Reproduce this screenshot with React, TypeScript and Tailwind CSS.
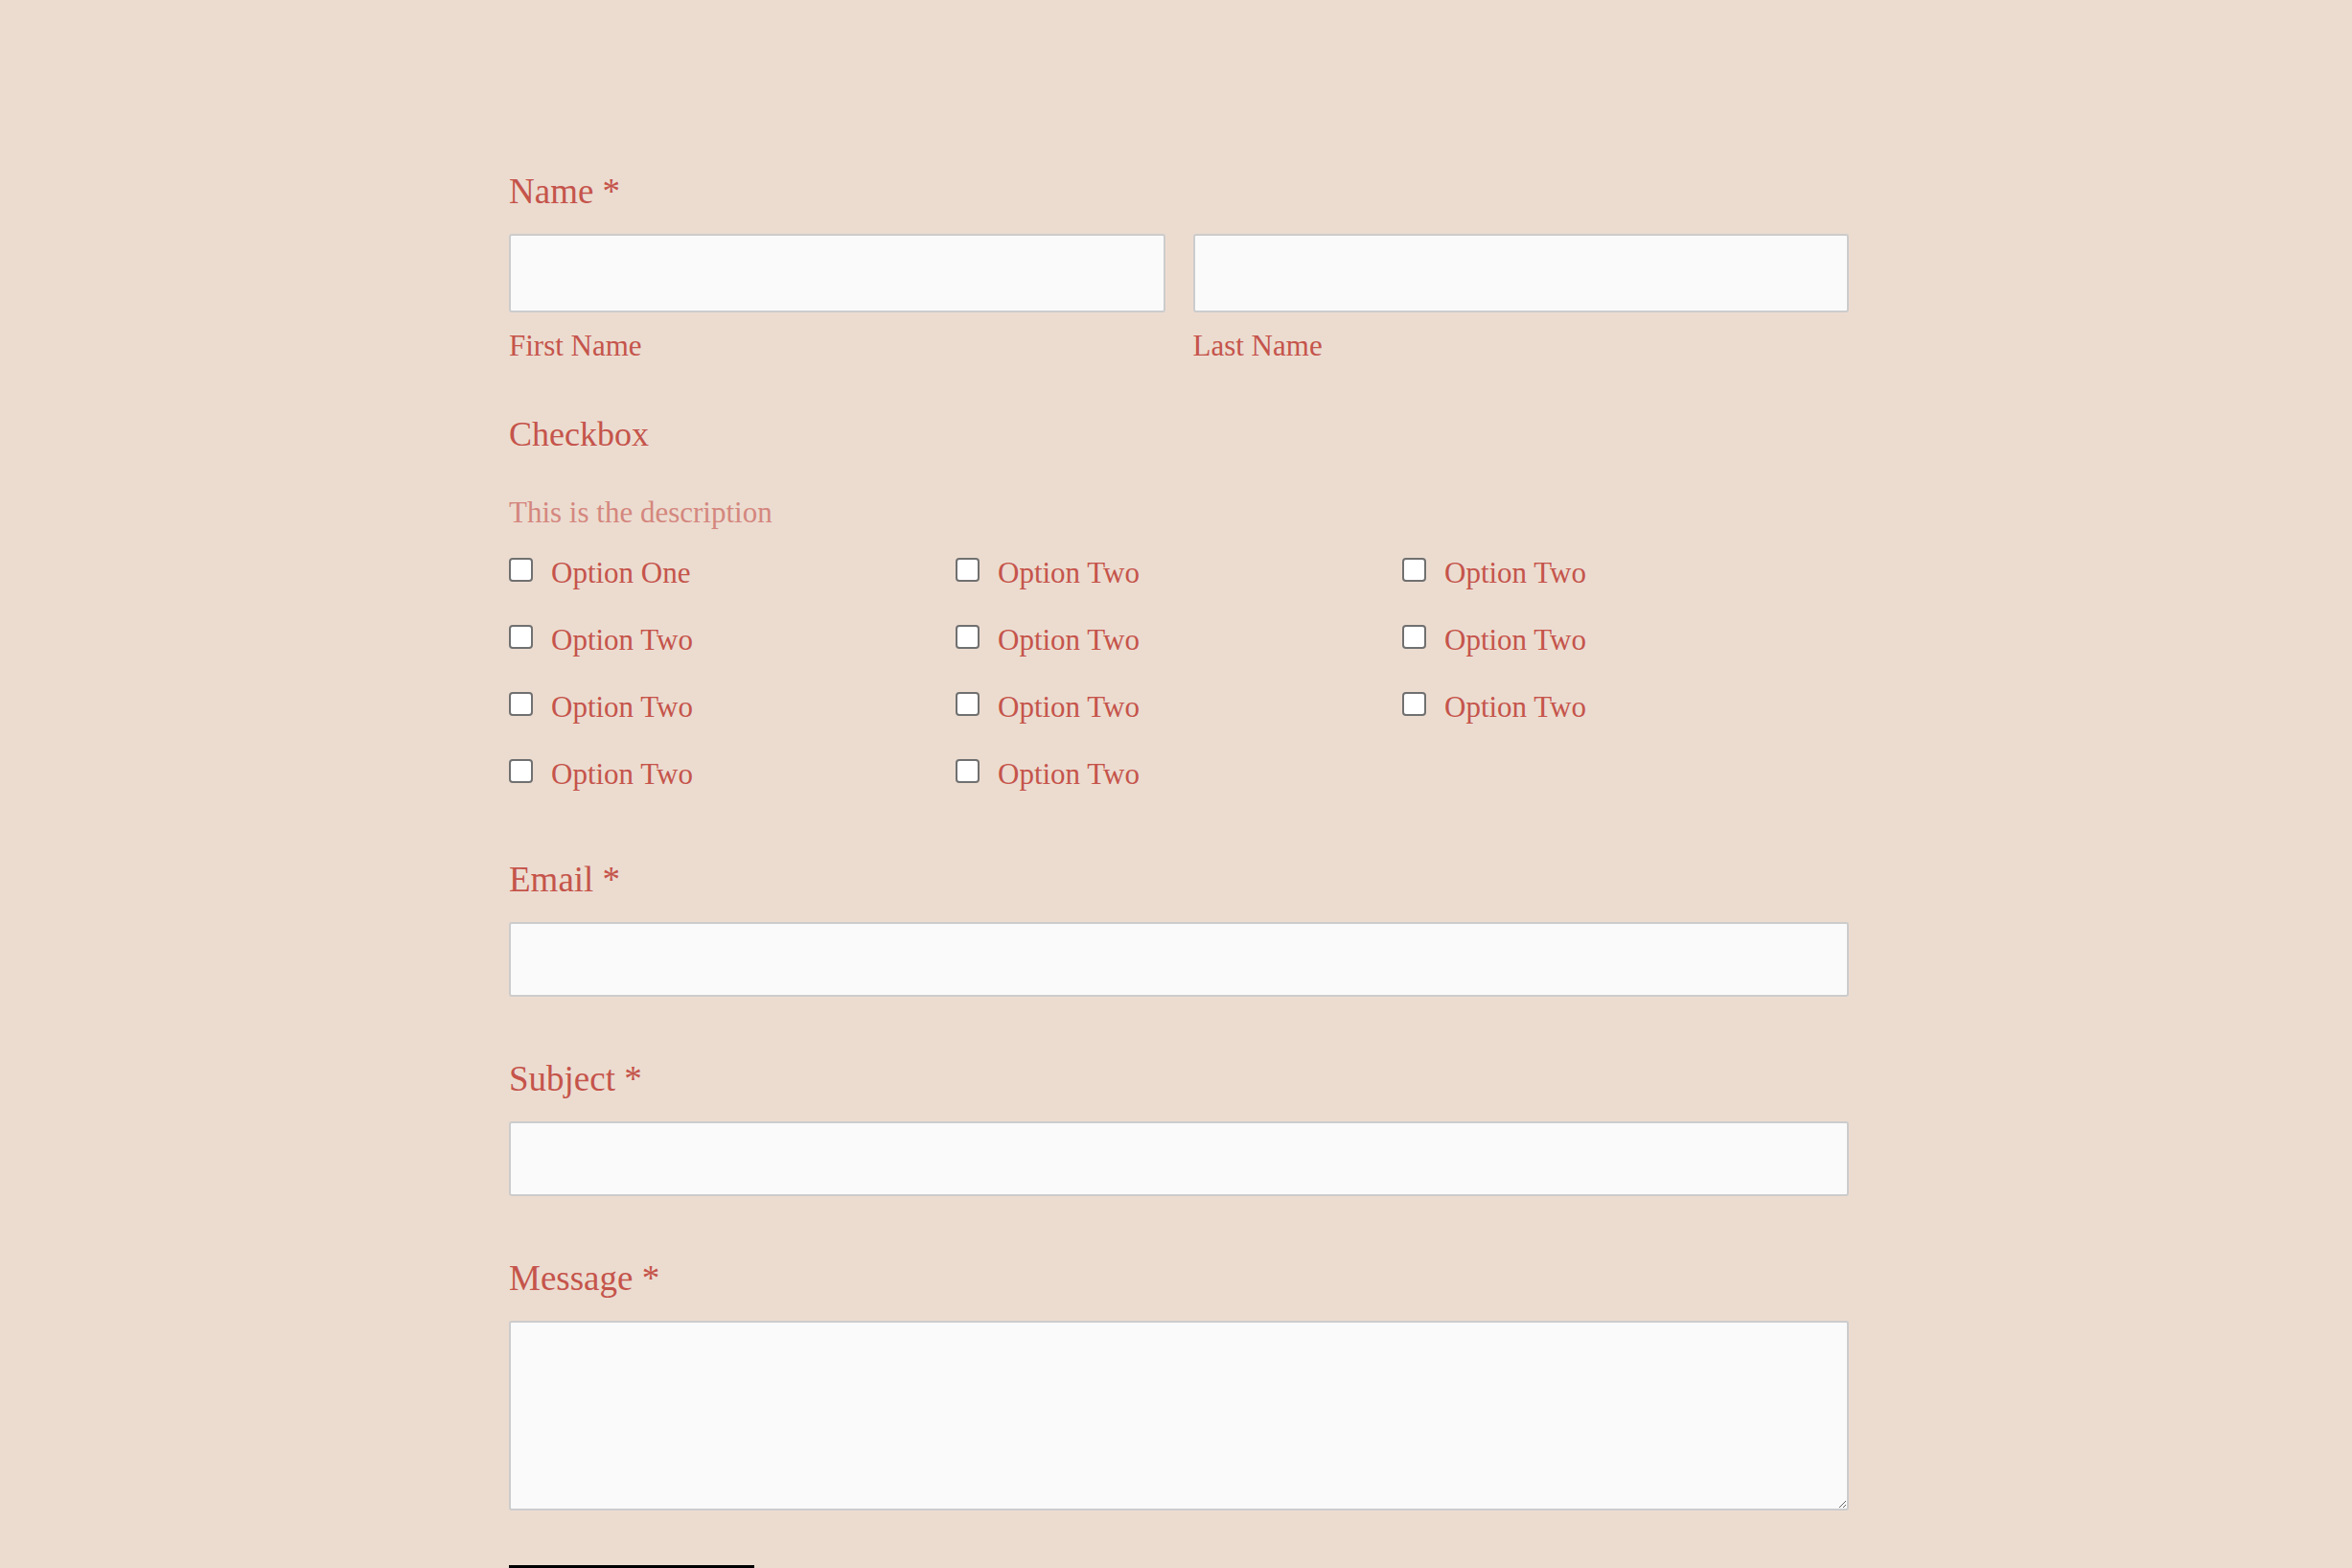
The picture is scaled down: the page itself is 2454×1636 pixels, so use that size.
import React from 'react';

const optionLabels = [
  'Option One',
  'Option Two',
  'Option Two',
  'Option Two',
  'Option Two',
  'Option Two',
  'Option Two',
  'Option Two',
  'Option Two',
  'Option Two',
  'Option Two',
];

function FieldLabel({ children, className = '' }: { children: React.ReactNode; className?: string }) {
  return <label className={`block text-[37px] leading-[44px] ${className}`}>{children}</label>;
}

function TextInput({ className = '' }: { className?: string }) {
  return (
    <input
      type="text"
      className={`block w-full rounded-[3px] border-2 border-[#cccccc] bg-[#fafafa] px-4 outline-none ${className}`}
    />
  );
}

export default function App() {
  // options fill the grid row by row, three per row
  return (
    <div className="h-[1636px] overflow-hidden bg-[#ecdcd0] pl-[6px] font-['Liberation_Serif',serif] text-[#c5544b]">
      <form className="mx-auto w-[1398px] pt-[178px]">
        <FieldLabel className="mb-[22px]">Name *</FieldLabel>
        <div className="grid grid-cols-2 gap-x-[29px]">
          <div>
            <TextInput className="h-[82px]" />
            <p className="mt-[15px] text-[31px] leading-[40px]">First Name</p>
          </div>
          <div>
            <TextInput className="h-[82px]" />
            <p className="mt-[15px] text-[31px] leading-[40px]">Last Name</p>
          </div>
        </div>

        <h3 className="mt-[50px] text-[36px] leading-[44px]">Checkbox</h3>
        <p className="mt-[40px] text-[31px] leading-[40px] text-[#d4877e]">This is the description</p>
        <div className="mt-[23px] grid grid-cols-3 gap-y-[30px]">
          {optionLabels.map((label, i) => (
            <label key={i} className="flex items-start gap-[19px] text-[31px] leading-[40px]">
              <input
                type="checkbox"
                className="mt-[4px] h-[25px] w-[25px] shrink-0 appearance-none rounded-[4px] border-2 border-[#707070] bg-white"
              />
              <span>{label}</span>
            </label>
          ))}
        </div>

        <FieldLabel className="mt-[68px] mb-[22px]">Email *</FieldLabel>
        <TextInput className="h-[78px]" />

        <FieldLabel className="mt-[64px] mb-[22px]">Subject *</FieldLabel>
        <TextInput className="h-[78px]" />

        <FieldLabel className="mt-[64px] mb-[22px]">Message *</FieldLabel>
        <textarea className="block h-[198px] w-full rounded-[3px] border-2 border-[#cccccc] bg-[#fafafa] px-4 py-3 outline-none" />

        {/* submit sits below the fold; only its top edge shows */}
        <div className="mt-[57px] h-[100px] w-[256px] bg-black" />
      </form>
    </div>
  );
}
